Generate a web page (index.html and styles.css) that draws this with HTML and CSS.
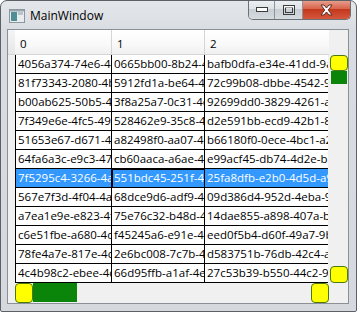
FILE: index.html
```html
<!DOCTYPE html>
<html lang="en">
<head>
    <meta charset="UTF-8">
    <title>MainWindow</title>
    <link rel="stylesheet" href="styles.css">
</head>
<body>

<div class="window">
    <!-- title bar -->
    <div class="titlebar">
        <svg class="app-icon" width="16" height="14" viewBox="0 0 16 14">
            <rect x="0.5" y="0.5" width="15" height="13" fill="#e8ecef" stroke="#8c969e"></rect>
            <rect x="2" y="3" width="6" height="9" fill="#4f8e92"></rect>
            <rect x="9" y="3" width="5" height="3" fill="#b9c3c9"></rect>
            <rect x="1" y="1" width="14" height="1.5" fill="#9aa6ad"></rect>
        </svg>
        <span class="title">MainWindow</span>
        <div class="caption-buttons">
            <div class="cap-btn min">
                <svg width="12" height="6" viewBox="0 0 12 6"><rect x="0.5" y="0.5" width="11" height="4" fill="#fff" stroke="#3c3c3c"></rect></svg>
            </div>
            <div class="cap-btn max">
                <svg width="12" height="10" viewBox="0 0 12 10"><rect x="0.5" y="0.5" width="11" height="9" fill="none" stroke="#3c3c3c"></rect><rect x="2.5" y="2.5" width="7" height="5" fill="none" stroke="#3c3c3c"></rect><rect x="1" y="1" width="10" height="1.5" fill="#fff"></rect></svg>
            </div>
            <div class="cap-btn close">
                <svg width="15" height="12" viewBox="0 0 15 12"><path d="M2 1 L5 1 L7.5 4 L10 1 L13 1 L9.3 6 L13 11 L10 11 L7.5 8 L5 11 L2 11 L5.7 6 Z" fill="#fff" stroke="#5a2a22" stroke-width="1"></path></svg>
            </div>
        </div>
    </div>

    <!-- client area with the data grid -->
    <div class="client">
        <div class="grid-header">
            <div class="corner"></div>
            <div class="col-header col-0">0</div>
            <div class="col-header col-1">1</div>
            <div class="col-header col-2">2</div>
            <div class="header-filler"></div>
        </div>

        <div class="grid-body">
            <div class="rows">
                <div class="row"><div class="row-header"></div><div class="cell col-0">4056a374-74e6-4a1b-9c2d-3e5f7a8b9c01</div><div class="cell col-1">0665bb00-8b24-4c3d-a1e2-f3a4b5c6d7e8</div><div class="cell col-2">bafb0dfa-e34e-41dd-9a0b-1c2d3e4f5a6b</div></div>
                <div class="row"><div class="row-header"></div><div class="cell col-0">81f73343-2080-4b5c-8d7e-6f5a4b3c2d1e</div><div class="cell col-1">5912fd1a-be64-4e3f-b2a1-0c9d8e7f6a5b</div><div class="cell col-2">72c99b08-dbbe-4542-9f8e-7d6c5b4a3f2e</div></div>
                <div class="row"><div class="row-header"></div><div class="cell col-0">b00ab625-50b5-4c6d-a7e8-9f0a1b2c3d4e</div><div class="cell col-1">3f8a25a7-0c31-4d2e-8f3a-4b5c6d7e8f9a</div><div class="cell col-2">92699dd0-3829-4261-a0b1-c2d3e4f5a6b7</div></div>
                <div class="row"><div class="row-header"></div><div class="cell col-0">7f349e6e-4fc5-49a8-b7c6-d5e4f3a2b1c0</div><div class="cell col-1">528462e9-35c8-4f1e-9d0c-b1a2f3e4d5c6</div><div class="cell col-2">d2e591bb-ecd9-42b1-8c7d-6e5f4a3b2c1d</div></div>
                <div class="row"><div class="row-header"></div><div class="cell col-0">51653e67-d671-4e2f-b3a4-c5d6e7f8a9b0</div><div class="cell col-1">a82498f0-aa07-4b1c-8d2e-3f4a5b6c7d8e</div><div class="cell col-2">b66180f0-0ece-4bc1-a2d3-e4f5a6b7c8d9</div></div>
                <div class="row"><div class="row-header"></div><div class="cell col-0">64fa6a3c-e9c3-47d8-9e0f-1a2b3c4d5e6f</div><div class="cell col-1">cb60aaca-a6ae-4f7e-b8c9-d0e1f2a3b4c5</div><div class="cell col-2">e99acf45-db74-4d2e-b5c6-d7e8f9a0b1c2</div></div>
                <div class="row selected"><div class="row-header"></div><div class="cell col-0">7f5295c4-3266-4a9b-8c1d-2e3f4a5b6c7d</div><div class="cell col-1 current">551bdc45-251f-4e8d-9c7b-6a5f4e3d2c1b</div><div class="cell col-2">25fa8dfb-e2b0-4d5d-a9e8-f7d6c5b4a3f2</div></div>
                <div class="row"><div class="row-header"></div><div class="cell col-0">567e7f3d-4f04-4a3b-b2c1-d0e9f8a7b6c5</div><div class="cell col-1">68dce9d6-adf9-4c2b-8a1f-0e9d8c7b6a5f</div><div class="cell col-2">09d386d4-952d-4eba-9f1e-2d3c4b5a6f7e</div></div>
                <div class="row"><div class="row-header"></div><div class="cell col-0">a7ea1e9e-e823-4f6e-a5d4-c3b2a1f0e9d8</div><div class="cell col-1">75e76c32-b48d-4e1f-b0a9-8f7e6d5c4b3a</div><div class="cell col-2">14dae855-a898-407a-b6c5-d4e3f2a1b0c9</div></div>
                <div class="row"><div class="row-header"></div><div class="cell col-0">c6e51fbe-a680-4d9c-8b7a-6f5e4d3c2b1a</div><div class="cell col-1">f45245a6-e91e-4a8b-9c0d-1e2f3a4b5c6d</div><div class="cell col-2">eed0f5b4-d60f-49a7-9b8c-7d6e5f4a3b2c</div></div>
                <div class="row"><div class="row-header"></div><div class="cell col-0">78fe4a7e-817e-4c5d-a6b7-c8d9e0f1a2b3</div><div class="cell col-1">2e6bc008-7c7b-4f3e-8d2c-1b0a9f8e7d6c</div><div class="cell col-2">d583751b-76db-42c4-a3b2-c1d0e9f8a7b6</div></div>
                <div class="row"><div class="row-header"></div><div class="cell col-0">4c4b98c2-ebee-4d1c-b2a3-f4e5d6c7b8a9</div><div class="cell col-1">66d95ffb-a1af-4e6d-9c8b-7a6f5e4d3c2b</div><div class="cell col-2">27c53b39-b550-44c2-9a1b-2c3d4e5f6a7b</div></div>
            </div>
            <!-- vertical scrollbar: yellow line buttons, green thumb -->
            <div class="vscroll">
                <div class="sb-button v-up"></div>
                <div class="sb-thumb v-thumb"></div>
                <div class="sb-track"></div>
                <div class="sb-button v-down"></div>
            </div>
        </div>

        <div class="grid-footer">
            <div class="footer-gap"></div>
            <div class="hscroll">
                <div class="sb-button h-left"></div>
                <div class="sb-thumb h-thumb"></div>
                <div class="sb-track"></div>
                <div class="sb-button h-right"></div>
            </div>
            <div class="footer-corner"></div>
        </div>
    </div>
</div>

</body>
</html>
```

FILE: styles.css
```css
:root {
    --grid-line: #000;
    --select: #3399ff;
    --sb-yellow: #ffff00;
    --sb-border: #4a7a10;
    --sb-green: #0a850a;
    --control-bg: #f0f0f0;
    --font-ui: "Segoe UI", "Open Sans", "Noto Sans", sans-serif;
}

* {
    box-sizing: border-box;
}

body {
    margin: 0;
    font-family: var(--font-ui);
    background: #fff;
}

/* --- window frame --- */
.window {
    width: 357px;
    height: 312px;
    border: 1px solid #5c6167;
    border-radius: 7px 7px 2px 2px;
    background: linear-gradient(to bottom, #e4e7ea 0, #d9dde1 30px, #d5d9dd 100%);
    display: flex;
    flex-direction: column;
    overflow: hidden;
}

.titlebar {
    height: 28px;
    display: flex;
    align-items: center;
    padding-left: 8px;
    position: relative;
}

.app-icon {
    margin-top: 1px;
}

.title {
    margin-left: 5px;
    font-size: 12px;
    color: #000;
}

.caption-buttons {
    position: absolute;
    top: -1px;
    right: 5px;
    display: flex;
    border: 1px solid #6b7179;
    border-top: none;
    border-radius: 0 0 5px 5px;
    overflow: hidden;
}

.cap-btn {
    height: 19px;
    display: flex;
    align-items: center;
    justify-content: center;
    background: linear-gradient(to bottom, #eef0f2 0, #dfe3e7 45%, #c9ced4 50%, #d6dbe0 100%);
}

.cap-btn.min { width: 26px; border-right: 1px solid #8d939a; }
.cap-btn.max { width: 28px; border-right: 1px solid #8d939a; }
.cap-btn.close {
    width: 47px;
    background: linear-gradient(to bottom, #e8a493 0, #d9654d 45%, #c4381d 50%, #d4583c 100%);
}

/* --- client area --- */
.client {
    margin-left: 6px;
    width: 342px;
    height: 275px;
    border: 1px solid #8b9096;
    background: var(--control-bg);
    display: flex;
    flex-direction: column;
    font-size: 11.5px;
    color: #000;
}

.grid-header {
    display: flex;
    height: 25px;
    flex-shrink: 0;
}

.corner {
    width: 7px;
    background: linear-gradient(to bottom, #f5f5f5, #e6e6e6);
    border-bottom: 1px solid #d5d5d5;
}

.col-header {
    padding: 6px 0 0 5px;
    background: linear-gradient(to bottom, #ffffff 0, #f9f9f9 60%, #f0f0f0 100%);
    border-right: 1px solid #d5d5d5;
    border-bottom: 1px solid #d5d5d5;
}

.col-header.col-2 { border-right: none; }

.header-filler {
    flex: 1;
    background: var(--control-bg);
}

.col-0 { width: 97px; }
.col-1 { width: 93px; }
.col-2 { width: 124px; }

.grid-body {
    display: flex;
    height: 228px;
    flex-shrink: 0;
}

.rows {
    width: 321px;
    overflow: hidden;
}

.row {
    display: flex;
    height: 19px;
}

.row-header {
    width: 7px;
    flex-shrink: 0;
    background: var(--control-bg);
}

.cell {
    flex-shrink: 0;
    background: #fff;
    border-right: 1px solid var(--grid-line);
    border-bottom: 1px solid var(--grid-line);
    padding: 1px 0 0 2px;
    line-height: 16px;
    white-space: nowrap;
    overflow: hidden;
}

.cell.col-0 {
    border-left: 1px solid var(--grid-line);
}

.cell.col-2 {
    width: 123px;
    border-right: none;
}

.row.selected .cell {
    background: var(--select);
    color: #fff;
}

.row.selected .cell.current {
    box-shadow: inset 1px 1px 0 #000;
}

/* --- scrollbars (custom yellow / green template) --- */
.vscroll {
    width: 19px;
    display: flex;
    flex-direction: column;
    padding-left: 1px;
}

.sb-button {
    background: var(--sb-yellow);
    border: 1px solid var(--sb-border);
    border-radius: 4px;
}

.sb-thumb {
    background: var(--sb-green);
}

.sb-track {
    flex: 1;
}

.v-up { height: 16px; }
.v-thumb { height: 13px; margin: 0 1px; }
.v-down { height: 17px; }

.grid-footer {
    display: flex;
    height: 20px;
}

.footer-gap {
    width: 7px;
}

.hscroll {
    width: 314px;
    display: flex;
}

.h-left { width: 18px; }
.h-thumb { width: 44px; margin: 0 0 1px; }
.h-right { width: 18px; }

.footer-corner {
    flex: 1;
}
```
